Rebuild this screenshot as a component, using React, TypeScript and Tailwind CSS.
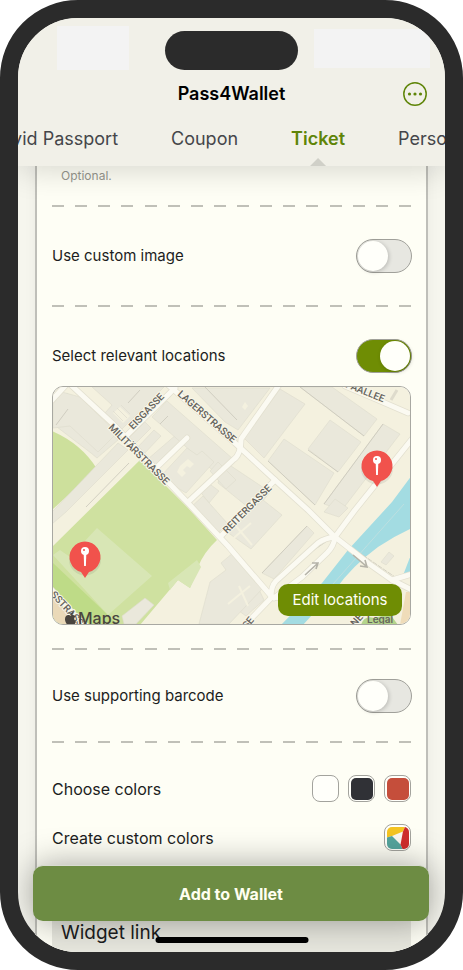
import { FaApple } from "react-icons/fa";

function Dashes() {
  return (
    <div className="flex h-[2px] justify-between" aria-hidden="true">
      {Array.from({ length: 16 }, (_, i) => (
        <span key={i} className="h-[2px] w-[12px] bg-[#c0c0b8]" />
      ))}
    </div>
  );
}

function ToggleRow({ id, label, on = false }: { id: string; label: string; on?: boolean }) {
  return (
    <div className="-mr-px flex items-center justify-between text-[15px]">
      <label htmlFor={id}>{label}</label>
      <input
        id={id}
        type="checkbox"
        defaultChecked={on}
        className="relative h-[34px] w-[56px] appearance-none rounded-full border border-[#a0a09a] bg-[#e7e7e1] before:absolute before:left-px before:top-px before:size-[30px] before:rounded-full before:bg-[#fffffa] before:shadow-[1px_1px_4px_rgba(0,0,0,0.2)] checked:bg-[#6f8d04] checked:before:left-[23px]"
      />
    </div>
  );
}

function Pin({ x, y }: { x: number; y: number }) {
  return (
    <g transform={`translate(${x} ${y})`}>
      <circle cx="0" cy="2.5" r="16" fill="#000" opacity="0.07" />
      <path d="M0 21 L-4 15 A15.5 15.5 0 1 1 4 15 Z" fill="#f1524c" />
      <circle cx="0" cy="-6" r="4" fill="#fff" />
      <circle cx="-1" cy="-7" r="1" fill="#f1524c" />
      <path d="M-1.3 -3 H1.3 L0.9 9 H-0.9 Z" fill="#fff" />
    </g>
  );
}

const buildings = [
  "M53 408 L67 393 L118 440 L97 458 L91 453 L53 424Z",
  "M53 404 L62 392 L80 397 L117 433 L98 452 L70 426 L53 428Z",
  "M92 387 L164 387 L122 429 L105 413 L112 405Z",
  "M118 443 L128 450 L66 512 L52 524 L52 512Z",
  "M127 440 L145 422 L151 428 L133 446Z",
  "M135 450 L154 430 L161 436 L141 457Z",
  "M148 459 L177 434 L182 439 L154 466Z",
  "M152 417 L167 401 L233 459 L217 474Z",
  "M160 477 L187 448 L197 455 L202 451 L214 462 L186 493Z",
  "M192 388 L270 388 L238 430 L225 422Z",
  "M244 438 L280 389 L305 404 L264 458Z",
  "M300 387 L332 387 L377 419 L364 436Z",
  "M308 449 L330 420 L361 442 L338 472Z",
  "M268 461 L284 439 L334 473 L315 505Z",
  "M324 504 L383 424 L400 434 L342 510Z",
  "M199 490 L207 482 L219 491 L209 503Z",
  "M220 474 L228 464 L270 492 L254 512 L218 483Z",
  "M210 471 L218 462 L236 480 L226 489Z",
  "M227 532 L263 500 L282 515 L251 549Z",
  "M190 508 L203 496 L227 523 L219 532Z",
  "M262 573 L307 526 L314 533 L274 579Z",
  "M231 586 L244 568 L253 577 L264 600 L246 616 L224 600Z",
  "M210 582 L226 570 L221 563 L234 552 L263 588 L229 624 L199 624Z",
  "M324 512 L335 499 L348 508 L339 517Z",
  "M381 562 L389 552 L394 556 L386 565Z",
  "M122 616 L145 598 L154 605 L136 624 L124 624Z",
];

const roads = [
  "M71 385 L112 423 L188 503 L228 546 L272 597 L245 625",
  "M125 437 L175 388",
  "M166 383 L235 443 L275 480 L308 510 L335 537 L368 563 L392 580 L412 590",
  "M279 385 L241 439 Q241 455 233 460 L188 502",
  "M275 480 L222 535",
  "M412 439 L355 510 L335 537 Q334 546 327 553 L302 577 L274 598",
  "M335 537 Q325 538 318 543 L276 581 Q271 586 271 597 L330 601",
  "M187 438 L155 469",
  "M345 386 L378 400 L408 413",
  "M52 400 L66 385",
  "M392 580 L412 574",
  "M48 586 L86 628",
];

const streets = [
  { t: "EISGASSE", x: 133, y: 430, r: -46 },
  { t: "MILITÄRSTRASSE", x: 108, y: 428, r: 45 },
  { t: "LAGERSTRASSE", x: 177, y: 395, r: 41 },
  { t: "REITERGASSE", x: 227, y: 534, r: -45 },
  { t: "PAALLEE", x: 345, y: 387, r: 22 },
  { t: "SSTRASSE", x: 50, y: 595, r: 47 },
  { t: "NEUE", x: 355, y: 627, r: -49 },
  { t: "SSE", x: 243, y: 634, r: -50 },
];

function CityMap() {
  return (
    <svg
      viewBox="53 387 357 237"
      preserveAspectRatio="xMidYMid slice"
      className="block h-full w-full"
      role="img"
      aria-label="Map of the selected locations"
    >
      <rect x="40" y="380" width="390" height="260" fill="#f4f1df" />
      <path d="M52 431 Q82 444 97 469 L52 510Z" fill="#cde09c" />
      <path
        d="M140 460 L188 508 L217 540 Q204 552 198 567 L190 588 L178 580 L140 625 L52 625 L52 547Z"
        fill="#cfe1a0"
      />
      <path d="M52 562 L108 615 L118 625 L84 625 L52 589Z" fill="#bedb87" />
      <path d="M97 528 L152 576 L108 615 L53 555 L60 550 L70 557Z" fill="#d8e6b5" />
      <path d="M168 583 L197 560 L201 567 L190 588 L178 580 L170 590Z" fill="#d8e6b5" />
      <path d="M52 596 L78 625 L52 625Z" fill="#ead9b8" />
      <path
        d="M412 475 L392 502 L348 550 L322 583 L280 626 L302 626 L335 590 Q352 566 378 547 Q394 536 412 528Z"
        fill="#a3dce2"
      />
      <path d="M412 552 L402 578 L412 574Z" fill="#a3dce2" />
      <path d="M361 625 Q364 615 374 618 L390 614 L398 625Z" fill="#b4d58c" />
      <path d="M400 625 L406 592 L412 592 L412 625Z" fill="#efdcb9" />
      <g fill="#eae8db" stroke="#dedbcc" strokeWidth="0.6">
        {buildings.map((d) => (
          <path key={d} d={d} />
        ))}
      </g>
      <g fill="none" stroke="#c9c6ba" strokeWidth="0.8">
        <path d="M300 387 L364 436" />
        <path d="M308 450 L338 472" />
        <path d="M324 504 L383 424" />
        <path d="M268 461 L315 505" />
        <path d="M128 403 L140 390" />
        <path d="M56 425 L68 409" />
        <path d="M160 424 L168 416" />
        <path d="M86 507 L129 463" />
        <path d="M262 573 L307 526" />
        <path d="M205 387 L237 420" />
        <path d="M282 572 L327 541" />
        <path d="M348 545 L395 577" strokeDasharray="5 1" />
        <path d="M333 584 L404 504" stroke="#c3dfdf" />
      </g>
      <g fill="#f4f1df">
        <path d="M180 466 L188 459 L194 464 L190 468 L187 466 L183 470 L186 473 L182 477 L177 472Z" />
        <path d="M242 407 L245 402 L248 406 L245 410Z" />
        <path d="M113 413 L120 407 L130 416 L123 423Z" />
      </g>
      <g fill="none" stroke="#e0ddcf" strokeWidth="0.8">
        <path d="M113 411 L123 421 M117 408 L127 418 M121 405 L130 414" />
      </g>
      <g fill="none" stroke="#f4f1df" strokeWidth="2">
        <path d="M235 525 L252 545 M228 543 L251 523 M239 586 L248 606 M228 604 L250 586" />
      </g>
      <g fill="none" stroke="#e3e0d0" strokeWidth="6.5" strokeLinejoin="round" strokeLinecap="round">
        {roads.map((d) => (
          <path key={d} d={d} />
        ))}
      </g>
      <g fill="none" stroke="#fbfaf2" strokeWidth="5" strokeLinejoin="round" strokeLinecap="round">
        {roads.map((d) => (
          <path key={d} d={d} />
        ))}
      </g>
      <path d="M391 400 L397 390" stroke="#dedbcc" strokeWidth="3" />
      <g fill="none" stroke="#b5b3a9" strokeWidth="1.6">
        <path d="M305 575 L317 564 M312 563 L318 563 L316 569" />
        <path d="M353 555 L366 566 M360 566 L367 567 L365 560" />
      </g>
      <g
        className="font-['Roboto',sans-serif] text-[10px] font-medium"
        fill="#64625c"
        stroke="#f8f6e8"
        strokeWidth="2"
        paintOrder="stroke"
      >
        {streets.map((s) => (
          <text key={s.t} transform={`translate(${s.x} ${s.y}) rotate(${s.r})`}>
            {s.t}
          </text>
        ))}
      </g>
      <text x="367" y="623" className="font-['Inter',sans-serif] text-[10px] font-semibold" fill="#66665c">
        Legal
      </text>
      <Pin x={377} y={466} />
      <Pin x={85} y={557} />
    </svg>
  );
}

function Swatch({ name, children }: { name: string; children?: React.ReactNode }) {
  return (
    <button
      type="button"
      aria-label={name}
      className="flex size-[27px] items-center justify-center rounded-[8px] border border-[#a3a39d] bg-[#fffffa]"
    >
      {children}
    </button>
  );
}

export default function App() {
  return (
    <div className="h-dvh bg-white">
      <main className="relative flex h-full flex-col overflow-hidden rounded-[78px] border-[18px] border-[#2b2b2b] bg-[#f6f6ee] font-['Inter',sans-serif] text-base text-[#1c1d21]">
        <header className="relative z-10 h-[148px] shrink-0 bg-[#f1f0e8] shadow-[0_4px_30px_rgba(0,0,0,0.16)]">
          <div className="flex h-[60px] items-start pl-[39px] pr-[15px] pt-[8px]" aria-hidden="true">
            <div className="h-[44px] w-[72px] bg-[#f3f3f3]" />
            <div className="ml-[36px] mt-[5px] h-[39px] w-[133px] rounded-full bg-[#2b2b2b]" />
            <div className="ml-[16px] mt-[3px] h-[39px] flex-1 bg-[#f3f3f3]" />
          </div>
          <div className="grid h-[32px] grid-cols-[1fr_auto_1fr] items-center">
            <h1 className="col-start-2 text-[18px] leading-[28px] font-semibold text-black">Pass4Wallet</h1>
            <button type="button" aria-label="More" className="mr-[18px] justify-self-end text-[#5f8508]">
              <svg viewBox="0 0 24 24" className="size-[24px]" fill="currentColor">
                <circle cx="12" cy="12" r="11.2" fill="none" stroke="currentColor" strokeWidth="1.5" />
                <circle cx="6.5" cy="12" r="1.6" />
                <circle cx="12" cy="12" r="1.6" />
                <circle cx="17.5" cy="12" r="1.6" />
              </svg>
            </button>
          </div>
          <nav className="flex h-[56px] justify-end gap-[53px] overflow-hidden whitespace-nowrap text-[18px] text-[#45464a]">
            <a href="#passport" className="pt-[15px]">Covid Passport</a>
            <a href="#coupon" className="pt-[15px]">Coupon</a>
            <a href="#ticket" aria-current="page" className="relative pt-[15px] font-semibold text-[#5f8508]">
              Ticket
              <span className="absolute bottom-0 left-1/2 h-[8px] w-[16px] -translate-x-1/2 bg-[#d0d0c8] [clip-path:polygon(50%_0,100%_100%,0_100%)]" />
            </a>
            <a href="#personal" className="w-[47px] pt-[15px]">Personal</a>
          </nav>
        </header>

        <section className="mx-[17px] flex-1 border-x-2 border-[#bfbfb9] bg-[#fefef5] px-[15px] shadow-[0_0_12px_rgba(0,0,0,0.05)]">
          <p className="pl-[9px] text-[12px] leading-[20px] text-[#96968e]">Optional.</p>
          <div className="h-[19px]" />
          <Dashes />
          <div className="py-[32px]">
            <ToggleRow id="image" label="Use custom image" />
          </div>
          <Dashes />
          <div className="pb-[13px] pt-[32px]">
            <ToggleRow id="locations" label="Select relevant locations" on />
          </div>
          <div className="relative mb-[23px] h-[239px] overflow-hidden rounded-[11px] border border-[#a8a8a2]">
            <CityMap />
            <div className="absolute -bottom-[6px] left-[10px] flex items-center text-[16px] font-medium text-[#49443e]">
              <FaApple className="size-[15px]" aria-hidden="true" />
              <span>Maps</span>
            </div>
            <button
              type="button"
              className="absolute bottom-[8px] right-[8px] h-[32px] w-[124px] rounded-[10px] bg-[#6f8d04] text-[15px] text-[#fffff5]"
            >
              Edit locations
            </button>
          </div>
          <Dashes />
          <div className="pb-[28px] pt-[29px]">
            <ToggleRow id="barcode" label="Use supporting barcode" />
          </div>
          <Dashes />
          <div className="flex items-center justify-between pt-[32px]">
            <span>Choose colors</span>
            <div className="flex gap-[9px]">
              <Swatch name="White" />
              <Swatch name="Black">
                <span className="size-[22px] rounded-[5px] bg-[#303136]" />
              </Swatch>
              <Swatch name="Red">
                <span className="size-[22px] rounded-[5px] bg-[#c54e3b]" />
              </Swatch>
            </div>
          </div>
          <div className="flex items-center justify-between pt-[22px]">
            <span>Create custom colors</span>
            <Swatch name="Custom color">
              <svg viewBox="0 0 22 22" className="size-[22px] rounded-[5px]">
                <rect width="22" height="22" fill="#faf6ef" />
                <path d="M0 0 H18 L16 4.5 L5 9 L0 10.5Z" fill="#f5c421" />
                <path d="M0 10.5 L5 9 L13.5 17.5 L15.5 22 H0Z" fill="#54a49c" />
                <path d="M18 0 H22 V22 H15.5 L13.5 17.5 L16 4.5Z" fill="#cf2c2c" />
              </svg>
            </Swatch>
          </div>
          <div className="mt-[60px] h-[60px] bg-[#e7e7de] pl-[9px] pt-[8px] text-[19px] leading-[28px]">Widget link</div>
        </section>

        <div className="absolute inset-x-0 bottom-[31px] z-10 pl-[15px] pr-[16px]">
          <button
            type="button"
            className="h-[56px] w-full rounded-[10px] border-t border-[#d9dcd2] bg-[#6d8c43] text-[16px] font-bold text-[#fffff0] shadow-[0_0_34px_rgba(0,0,0,0.36)]"
          >
            Add to Wallet
          </button>
        </div>
        <div className="absolute bottom-[9px] left-1/2 z-20 h-[6px] w-[153px] -translate-x-1/2 rounded-full bg-black" />
      </main>
    </div>
  );
}
